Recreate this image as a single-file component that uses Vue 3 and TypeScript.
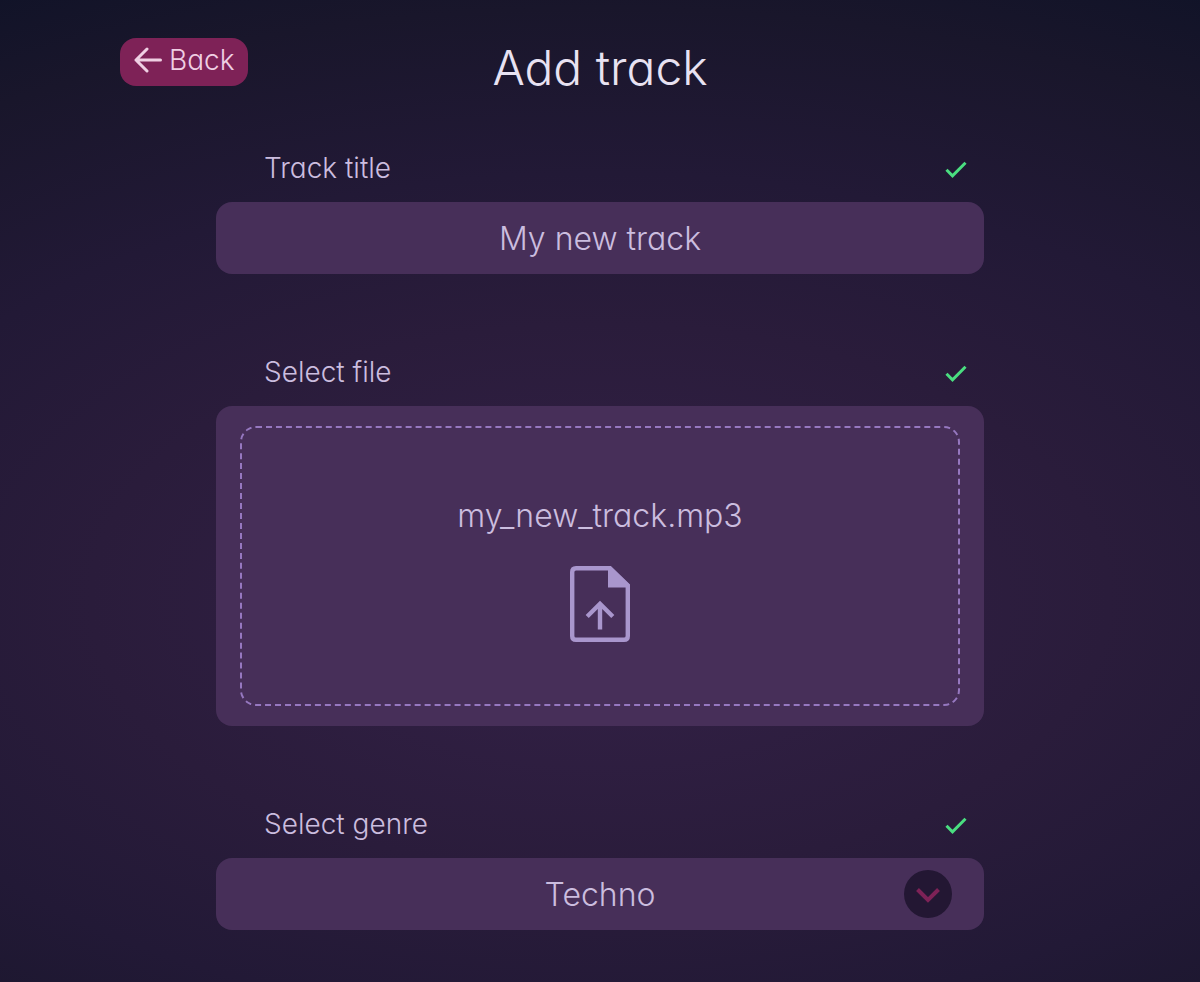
<script setup lang="ts">
import { computed, ref } from 'vue'

const title = ref<string>('My new track')
const fileName = ref<string>('my_new_track.mp3')
const genres: string[] = ['Techno', 'House', 'Ambient', 'Trance']
const genre = ref<string>('Techno')

const titleValid = computed<boolean>(() => title.value.trim().length > 0)
const fileValid = computed<boolean>(() => fileName.value.length > 0)
const genreValid = computed<boolean>(() => genre.value.length > 0)

function onFile(event: Event): void {
  const file = (event.target as HTMLInputElement).files?.[0]
  if (file) fileName.value = file.name
}
</script>

<template>
  <div class="page">
    <header class="header">
      <button class="back" type="button">
        <svg class="back-icon" viewBox="0 0 28 26" aria-hidden="true">
          <path d="M13 2 L2 13 L13 24 M2 13 H26.500" />
        </svg>
        <span>Back</span>
      </button>
      <h1 class="heading">Add track</h1>
    </header>

    <form class="form" @submit.prevent>
      <div class="field">
        <div class="caption">
          <label for="track-title">Track title</label>
          <svg v-if="titleValid" class="check" viewBox="0 0 24 24" aria-hidden="true">
            <path d="M2.500 11.800 L8.500 17.800 L21.500 4.800" />
          </svg>
        </div>
        <input id="track-title" v-model="title" class="box text" type="text" />
      </div>

      <div class="field">
        <div class="caption">
          <label for="track-file">Select file</label>
          <svg v-if="fileValid" class="check" viewBox="0 0 24 24" aria-hidden="true">
            <path d="M2.500 11.800 L8.500 17.800 L21.500 4.800" />
          </svg>
        </div>
        <label class="box drop" for="track-file">
          <input id="track-file" class="file" type="file" accept="audio/*" @change="onFile" />
          <span class="zone">
            <span>{{ fileName }}</span>
            <svg class="file-icon" viewBox="0 0 60 76" aria-hidden="true">
              <path
                class="sheet"
                d="M6 2.200 H40 L57.800 19.500 V70 Q57.800 73.800 54 73.800 H6 Q2.200 73.800 2.200 70 V6 Q2.200 2.200 6 2.200 Z"
              />
              <path class="fold" d="M38 1 H41 L60 19 V21.500 H38 Z" />
              <path class="arrow" d="M30 63.500 V38 M17.200 50.500 L30 37.800 L42.800 50.500" />
            </svg>
          </span>
        </label>
      </div>

      <div class="field">
        <div class="caption">
          <label for="track-genre">Select genre</label>
          <svg v-if="genreValid" class="check" viewBox="0 0 24 24" aria-hidden="true">
            <path d="M2.500 11.800 L8.500 17.800 L21.500 4.800" />
          </svg>
        </div>
        <div class="select-wrap">
          <select id="track-genre" v-model="genre" class="box text select">
            <option v-for="item in genres" :key="item" :value="item">{{ item }}</option>
          </select>
          <span class="knob">
            <svg viewBox="0 0 48 48" aria-hidden="true">
              <path d="M13.500 19.500 L24 30 L34.500 19.500" />
            </svg>
          </span>
        </div>
      </div>
    </form>
  </div>
</template>

<style>
body {
  margin: 0;
  background: #111328;
}
</style>

<style scoped>
.page {
  box-sizing: border-box;
  min-height: 100vh;
  padding: 38px 10% 52px;
  background: radial-gradient(ellipse 106% 70% at 50% 61%, #342148 0%, #2a1c3b 40%, #221936 62%, #19162b 86%, #111328 100%);
  color: #cbbddf;
  font-family: Inter, "Liberation Sans", sans-serif;
  font-feature-settings: "cv11";
  font-weight: 300;
}

.header {
  display: grid;
  grid-template-columns: 1fr auto 1fr;
  align-items: start;
  height: 112px;
}

.back {
  display: flex;
  align-items: center;
  justify-content: center;
  justify-self: start;
  gap: 7px;
  height: 48px;
  padding: 0 13px 4px 14px;
  border: 0;
  border-radius: 16px;
  background: #7e2257;
  color: #efcfe3;
  font: inherit;
  font-feature-settings: inherit;
  font-size: 28px;
  line-height: 44px;
  cursor: pointer;
}

.back-icon {
  width: 28px;
  height: 26px;
  fill: none;
  stroke: currentColor;
  stroke-width: 3;
  stroke-linecap: round;
  stroke-linejoin: round;
}

.heading {
  margin: 0;
  color: #e8e2f2;
  font-size: 48px;
  font-weight: inherit;
  line-height: 60px;
}

.form {
  display: flex;
  flex-direction: column;
  gap: 80px;
  max-width: 768px;
  margin: 0 auto;
}

.caption {
  display: flex;
  align-items: center;
  justify-content: space-between;
  height: 40px;
  margin-bottom: 12px;
  padding: 0 16px 0 48px;
  font-size: 28px;
  line-height: 36px;
}

.caption label {
  margin-bottom: 4px;
}

.check {
  width: 24px;
  height: 24px;
  fill: none;
  stroke: #4ade80;
  stroke-width: 3;
}

.box {
  display: block;
  box-sizing: border-box;
  width: 100%;
  border: 0;
  border-radius: 16px;
  background: #472f59;
  color: inherit;
  font: inherit;
  font-feature-settings: inherit;
  font-size: 32px;
}

.text {
  height: 72px;
  padding: 0 24px;
  text-align: center;
  text-align-last: center;
}

.drop {
  position: relative;
  padding: 20px 24px;
  cursor: pointer;
}

.file {
  position: absolute;
  inset: 0;
  width: 100%;
  height: 100%;
  margin: 0;
  opacity: 0;
  cursor: pointer;
}

.zone {
  display: flex;
  flex-direction: column;
  align-items: center;
  justify-content: center;
  gap: 24px;
  box-sizing: border-box;
  min-height: 280px;
  border: 2px dashed #9678c0;
  border-radius: 16px;
  line-height: 52px;
}

.file-icon {
  width: 60px;
  height: 76px;
}

.sheet,
.arrow {
  fill: none;
  stroke: #a996cd;
  stroke-width: 4.400;
}

.fold {
  fill: #a996cd;
}

.select-wrap {
  position: relative;
}

.select {
  appearance: none;
  cursor: pointer;
}

.knob {
  position: absolute;
  top: 12px;
  right: 32px;
  width: 48px;
  height: 48px;
  border-radius: 50%;
  background: #231733;
  pointer-events: none;
}

.knob svg {
  display: block;
  fill: none;
  stroke: #7e2257;
  stroke-width: 4;
}
</style>
